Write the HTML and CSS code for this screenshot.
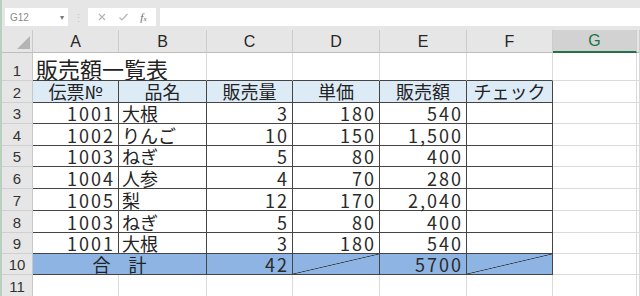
FILE: index.html
```html
<!DOCTYPE html>
<html lang="ja">
<head>
    <meta charset="UTF-8">
    <title>販売額一覧表</title>
    <link rel="stylesheet" href="styles.css">
</head>
<body>
    <div class="toolbar">
        <div class="name-box">
            <span>G12</span>
            <span class="caret">▾</span>
        </div>
        <div class="grip">⋮</div>
        <div class="fx-buttons">
            <svg width="10" height="10" viewBox="0 0 10 10"><path d="M2 2 L8 8 M8 2 L2 8" stroke="#b4b4b4" stroke-width="1.2" fill="none"/></svg>
            <svg width="11" height="10" viewBox="0 0 11 10"><path d="M1.5 5.5 L4 8 L9.5 2" stroke="#b4b4b4" stroke-width="1.2" fill="none"/></svg>
            <span class="fx">f<small>x</small></span>
        </div>
        <div class="formula"></div>
    </div>

    <div class="sheet">
        <!-- column headers -->
        <div class="corner"><span class="tri"></span></div>
        <div class="col-head">A</div>
        <div class="col-head">B</div>
        <div class="col-head">C</div>
        <div class="col-head">D</div>
        <div class="col-head">E</div>
        <div class="col-head">F</div>
        <div class="col-head active">G</div>
        <div class="col-head"></div>

        <!-- row 1 -->
        <div class="row-head">1</div>
        <div class="cell title top">販売額一覧表</div>
        <div class="cell top"></div>
        <div class="cell top"></div>
        <div class="cell top"></div>
        <div class="cell top"></div>
        <div class="cell top"></div>
        <div class="cell"></div>
        <div class="cell"></div>

        <!-- row 2 -->
        <div class="row-head">2</div>
        <div class="cell t head">伝票№</div>
        <div class="cell t head">品名</div>
        <div class="cell t head">販売量</div>
        <div class="cell t head">単価</div>
        <div class="cell t head">販売額</div>
        <div class="cell t head">チェック</div>
        <div class="cell"></div>
        <div class="cell"></div>

        <!-- row 3 -->
        <div class="row-head">3</div>
        <div class="cell t num">1001</div>
        <div class="cell t txt">大根</div>
        <div class="cell t num">3</div>
        <div class="cell t num">180</div>
        <div class="cell t num">540</div>
        <div class="cell t"></div>
        <div class="cell"></div>
        <div class="cell"></div>

        <!-- row 4 -->
        <div class="row-head">4</div>
        <div class="cell t num">1002</div>
        <div class="cell t txt">りんご</div>
        <div class="cell t num">10</div>
        <div class="cell t num">150</div>
        <div class="cell t num">1,500</div>
        <div class="cell t"></div>
        <div class="cell"></div>
        <div class="cell"></div>

        <!-- row 5 -->
        <div class="row-head">5</div>
        <div class="cell t num">1003</div>
        <div class="cell t txt">ねぎ</div>
        <div class="cell t num">5</div>
        <div class="cell t num">80</div>
        <div class="cell t num">400</div>
        <div class="cell t"></div>
        <div class="cell"></div>
        <div class="cell"></div>

        <!-- row 6 -->
        <div class="row-head">6</div>
        <div class="cell t num">1004</div>
        <div class="cell t txt">人参</div>
        <div class="cell t num">4</div>
        <div class="cell t num">70</div>
        <div class="cell t num">280</div>
        <div class="cell t"></div>
        <div class="cell"></div>
        <div class="cell"></div>

        <!-- row 7 -->
        <div class="row-head">7</div>
        <div class="cell t num">1005</div>
        <div class="cell t txt">梨</div>
        <div class="cell t num">12</div>
        <div class="cell t num">170</div>
        <div class="cell t num">2,040</div>
        <div class="cell t"></div>
        <div class="cell"></div>
        <div class="cell"></div>

        <!-- row 8 -->
        <div class="row-head">8</div>
        <div class="cell t num">1003</div>
        <div class="cell t txt">ねぎ</div>
        <div class="cell t num">5</div>
        <div class="cell t num">80</div>
        <div class="cell t num">400</div>
        <div class="cell t"></div>
        <div class="cell"></div>
        <div class="cell"></div>

        <!-- row 9 -->
        <div class="row-head">9</div>
        <div class="cell t num">1001</div>
        <div class="cell t txt">大根</div>
        <div class="cell t num">3</div>
        <div class="cell t num">180</div>
        <div class="cell t num">540</div>
        <div class="cell t"></div>
        <div class="cell"></div>
        <div class="cell"></div>

        <!-- row 10 -->
        <div class="row-head">10</div>
        <div class="cell t total merged">合　計</div>
        <div class="cell t total num">42</div>
        <div class="cell t total diag"></div>
        <div class="cell t total num">5700</div>
        <div class="cell t total diag"></div>
        <div class="cell"></div>
        <div class="cell"></div>

        <!-- row 11 -->
        <div class="row-head">11</div>
        <div class="cell"></div>
        <div class="cell"></div>
        <div class="cell"></div>
        <div class="cell"></div>
        <div class="cell"></div>
        <div class="cell"></div>
        <div class="cell"></div>
        <div class="cell"></div>
    </div>
</body>
</html>
```

FILE: styles.css
```css
* {
    margin: 0;
    padding: 0;
    box-sizing: border-box;
}

body {
    width: 640px;
    height: 296px;
    overflow: hidden;
    background: #fff;
    border-left: 2px solid #b9cfc0;
    font-family: "Noto Sans CJK JP", "Noto Sans", sans-serif;
    color: #222;
}

/* formula bar */
.toolbar {
    height: 30px;
    background: #e6e6e6;
    display: flex;
    align-items: flex-start;
    padding-top: 8px;
    padding-left: 3px;
}

.name-box {
    width: 63px;
    height: 18px;
    background: #fff;
    display: flex;
    align-items: center;
    justify-content: space-between;
    padding: 0 4px 0 5px;
    font-family: "Liberation Sans", sans-serif;
    font-size: 10px;
    color: #8a8a8a;
}

.name-box .caret {
    font-size: 8px;
    color: #777;
}

.grip {
    width: 20px;
    height: 18px;
    text-align: center;
    line-height: 18px;
    font-size: 11px;
    color: #c4c4c4;
}

.fx-buttons {
    width: 68px;
    height: 18px;
    background: #fff;
    display: flex;
    align-items: center;
    justify-content: space-around;
    padding: 0 4px;
}

.fx {
    font-family: "Liberation Serif", serif;
    font-style: italic;
    font-size: 11px;
    color: #666;
}

.fx small {
    font-size: 7px;
}

.formula {
    flex: 1;
    height: 18px;
    margin-left: 4px;
    background: #fff;
}

/* sheet grid */
.sheet {
    display: grid;
    grid-template-columns: 31px 86px 88px 86px 87px 87px 86px 84px 1fr;
    grid-template-rows: 23px 28px 22px 21px 22px 21px 22px 22px 22px 21px 21px 22px;
}

.corner {
    background: #e6e6e6;
    border-right: 1px solid #c8c8c8;
    border-bottom: 1px solid #bdbdbd;
    position: relative;
}

.corner .tri {
    position: absolute;
    right: 2px;
    bottom: 3px;
    width: 0;
    height: 0;
    border-left: 13px solid transparent;
    border-bottom: 13px solid #b4b4b4;
}

.col-head {
    background: #e6e6e6;
    border-right: 1px solid #cdcdcd;
    border-bottom: 1px solid #bdbdbd;
    display: flex;
    align-items: center;
    justify-content: center;
    font-family: "Liberation Sans", sans-serif;
    font-size: 16px;
    color: #262626;
    padding-top: 1px;
}

.col-head.active {
    background: #d2d2d2;
    color: #217346;
    border-bottom: 2px solid #217346;
}

.row-head {
    background: #e6e6e6;
    border-right: 1px solid #c8c8c8;
    border-bottom: 1px solid #d0d0d0;
    display: flex;
    align-items: flex-end;
    justify-content: center;
    font-family: "Liberation Sans", sans-serif;
    font-size: 15px;
    line-height: 17px;
    color: #333;
    padding-bottom: 1px;
}

.cell {
    border-right: 1px solid #dadada;
    border-bottom: 1px solid #dadada;
    display: flex;
    align-items: flex-end;
    font-size: 18px;
    line-height: 19px;
    white-space: nowrap;
}

.cell.top {
    border-bottom-color: #444;
}

.cell.t {
    border-right-color: #444;
    border-bottom-color: #444;
}

.title {
    font-size: 22px;
    line-height: 24px;
    padding-left: 3px;
    border-right: none;
}

.head {
    background: #ddebf7;
    justify-content: center;
    align-items: center;
}

.txt {
    padding-left: 3px;
}

.num {
    justify-content: flex-end;
    padding-right: 3px;
    letter-spacing: 2px;
    color: #2a2a2a;
}

.total {
    background: #8db4e2;
}

.merged {
    grid-column: span 2;
    justify-content: center;
}

.diag {
    background:
        linear-gradient(to bottom right,
            transparent calc(50% - 0.7px),
            #333 50%,
            transparent calc(50% + 0.7px)),
        #8db4e2;
}
```
